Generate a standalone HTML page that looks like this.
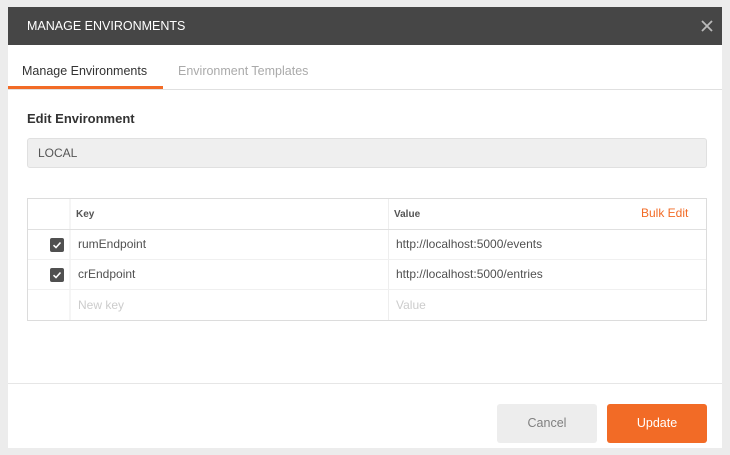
<!DOCTYPE html><html><head><style>
body{margin:0;width:730px;height:455px;background:#ececec;font-family:"Liberation Sans",sans-serif;position:relative;overflow:hidden}
.p{position:absolute;left:8px;top:7px;width:714px;height:441px;background:#fff}
.a{position:absolute}
.hd{left:0;top:0;width:714px;height:38px;background:#464646;color:#fff;font-size:12.5px;line-height:38px}
.cb{width:14px;height:14px;background:#505050;border-radius:2px}
.t{font-size:12px;color:#505050}
</style></head><body>
<div class="p">
<div class="a hd"><span style="margin-left:19px">MANAGE ENVIRONMENTS</span>
<svg class="a" style="left:693px;top:13px" width="12" height="12"><path d="M1 1L11 11M11 1L1 11" stroke="#bbb" stroke-width="1.8"/></svg></div>
<div class="a" style="left:14px;top:57px;font-size:12.5px;color:#333">Manage Environments</div>
<div class="a" style="left:170px;top:57px;font-size:12.5px;color:#aaa">Environment Templates</div>
<div class="a" style="left:0;top:82px;width:714px;height:1px;background:#e0e0e0"></div>
<div class="a" style="left:0;top:79px;width:155px;height:3px;background:#f26b26"></div>
<div class="a" style="left:19px;top:104px;font-size:13px;color:#333;font-weight:bold;letter-spacing:0">Edit Environment</div>
<div class="a" style="left:19px;top:131px;width:678px;height:28px;background:#efefef;border:1px solid #e0e0e0;border-radius:3px"></div>
<div class="a" style="left:30px;top:139px;font-size:12px;color:#555">LOCAL</div>
<div class="a" style="left:19px;top:191px;width:678px;height:121px;border:1px solid #dcdcdc"></div>
<div class="a" style="left:61px;top:192px;width:2px;height:121px;background:#f5f5f5"></div>
<div class="a" style="left:380px;top:192px;width:1px;height:121px;background:#eee"></div>
<div class="a" style="left:20px;top:222px;width:678px;height:1px;background:#e0e0e0"></div>
<div class="a" style="left:20px;top:252px;width:678px;height:1px;background:#f0f0f0"></div>
<div class="a" style="left:20px;top:282px;width:678px;height:1px;background:#f0f0f0"></div>
<div class="a" style="left:68px;top:202px;font-size:10px;color:#555;font-weight:bold">Key</div>
<div class="a" style="left:386px;top:202px;font-size:10px;color:#555;font-weight:bold">Value</div>
<div class="a" style="left:633px;top:199px;font-size:12px;color:#f26b26">Bulk Edit</div>
<div class="a cb" style="left:42px;top:231px"><svg width="14" height="14"><path d="M3.5 7.2L6 9.5L10.5 4.5" stroke="#fff" stroke-width="1.6" fill="none"/></svg></div>
<div class="a cb" style="left:42px;top:261px"><svg width="14" height="14"><path d="M3.5 7.2L6 9.5L10.5 4.5" stroke="#fff" stroke-width="1.6" fill="none"/></svg></div>
<div class="a t" style="left:70px;top:230px">rumEndpoint</div>
<div class="a t" style="left:388px;top:230px">http://localhost:5000/events</div>
<div class="a t" style="left:70px;top:260px">crEndpoint</div>
<div class="a t" style="left:388px;top:260px">http://localhost:5000/entries</div>
<div class="a t" style="left:70px;top:291px;color:#ccc">New key</div>
<div class="a t" style="left:388px;top:291px;color:#ccc">Value</div>
<div class="a" style="left:0;top:376px;width:714px;height:1px;background:#e6e6e6"></div>
<div class="a" style="left:489px;top:397px;width:100px;height:39px;background:#ededed;border-radius:3px;color:#808080;font-size:12.5px;text-align:center;line-height:39px">Cancel</div>
<div class="a" style="left:599px;top:397px;width:100px;height:39px;background:#f26b26;border-radius:3px;color:#fff;font-size:12.5px;text-align:center;line-height:39px">Update</div>
</div>
</body></html>
